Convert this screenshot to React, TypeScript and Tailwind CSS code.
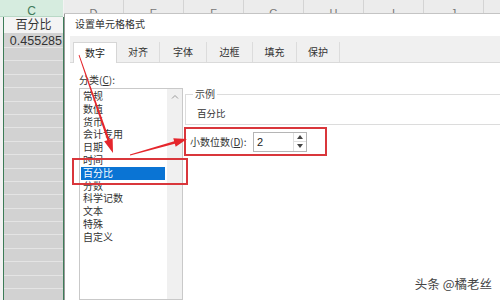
import React from "react";

const items = ["常规", "数值", "货币", "会计专用", "日期", "时间", "百分比", "分数", "科学记数", "文本", "特殊", "自定义"];
const tabs = [
  { t: "对齐", w: "w-[43px]" },
  { t: "字体", w: "w-[47px]" },
  { t: "边框", w: "w-[46px]" },
  { t: "填充", w: "w-[44px]" },
  { t: "保护", w: "w-[43px]" },
];
const cols = ["D", "E", "F", "G", "H", "I", "J"];

export default function App() {
  const rows = Array.from({ length: 20 });
  return (
    <div className="relative w-[500px] h-[300px] overflow-hidden bg-white flex font-['Liberation_Sans','Noto_Sans_CJK_SC',sans-serif] text-[#2b2b2b]">
      {/* Column C */}
      <div className="w-[64px] shrink-0 flex flex-col bg-[#f3f3f3]">
        <div className="h-[17px] w-[63px] shrink-0 bg-[#d6ecdf] border-b border-[#b9d8c6] overflow-hidden text-center text-[12px] leading-[14px] pt-[4px] text-[#3f7a5a]">
          C
        </div>
        <div className="ml-[3px] w-[61px] flex-1 border-x border-[#3d7c58] flex flex-col overflow-hidden">
          <div className="h-[16px] shrink-0 bg-[#f4f4f4] text-center text-[12px] leading-[17px] text-[#333]">百分比</div>
          <div className="h-[14px] shrink-0 bg-[#d2d2d2] text-right pr-[1px] text-[12.5px] leading-[16px] text-[#333] whitespace-nowrap">0.455285</div>
          {rows.map((_, i) => (
            <div key={i} className="h-[13.4px] shrink-0 bg-[#d2d2d2] border-t border-[#e4e4e4]" />
          ))}
        </div>
      </div>

      {/* Right region */}
      <div className="flex-1 flex flex-col min-w-0">
        <div className="h-[14px] shrink-0 flex bg-[#ececec] border-b border-[#c4c4c4] overflow-hidden">
          {cols.map((c) => (
            <div key={c} className="w-[60px] shrink-0 border-r border-[#d4d4d4] text-center text-[11px] leading-[14px] pt-[6px] text-[#777]">
              {c}
            </div>
          ))}
        </div>

        {/* Dialog */}
        <div className="flex-1 flex flex-col bg-white border-l border-[#9a9a9a] overflow-hidden font-['Noto_Sans_CJK_SC',sans-serif]">
          <div className="h-[22px] shrink-0 pl-[10px] pt-[4px] text-[10px] leading-[12px] text-[#333]">设置单元格格式</div>

          <div className="h-[27px] shrink-0 ml-[5px] bg-[#f0f0f0] border-b border-[#dadada] flex items-end pl-[3px]">
            <div className="w-[44px] h-[21px] bg-white border-x border-t border-[#d6d6d6] text-center text-[10px] leading-[20px] text-[#222] -mb-px">
              数字
            </div>
            {tabs.map((tb) => (
              <div key={tb.t} className={`${tb.w} h-[20px] border-r border-[#dcdcdc] text-center text-[10px] leading-[20px] text-[#333]`}>
                {tb.t}
              </div>
            ))}
          </div>

          <div className="flex-1 flex">
            {/* Category list */}
            <div className="ml-[14px] w-[104px] shrink-0 flex flex-col">
              <div className="mt-[11px] text-[10px] leading-[12px] text-[#333]">
                分类(<span className="underline">C</span>):
              </div>
              <div className="mt-[2px] flex-1 flex border border-[#c9c9c9] bg-white">
                <div className="flex-1 pt-[1px]">
                  {items.map((it) => (
                    <div
                      key={it}
                      className={
                        it === "百分比"
                          ? "ml-[1px] w-[84px] h-[12.8px] leading-[12.8px] pl-[2px] text-[10px] bg-[#0a74d4] text-white"
                          : "ml-[1px] w-[84px] h-[12.8px] leading-[12.8px] pl-[2px] text-[10px] text-[#333]"
                      }
                    >
                      {it}
                    </div>
                  ))}
                </div>
                <div className="w-[15px] shrink-0 bg-[#f0f0f0] flex justify-center pt-[5px]">
                  <svg width="8" height="5" viewBox="0 0 8 5">
                    <polyline points="1,4.5 4,1.5 7,4.5" fill="none" stroke="#9a9a9a" strokeWidth="1" />
                  </svg>
                </div>
              </div>
            </div>

            {/* Right pane */}
            <div className="ml-[2px] w-[400px] shrink-0 flex flex-col">
              <fieldset className="mt-[25px] border border-[#dcdcdc] pb-[5px]">
                <legend className="ml-[7px] px-[2px] text-[10px] leading-[12px] text-[#444]">示例</legend>
                <div className="pl-[11px] pt-[7px] text-[9.5px] leading-[12px] text-[#333]">百分比</div>
              </fieldset>
              <div className="mt-[3px] h-[27px] flex items-center">
                <div className="w-[68px] pl-[5px] text-[10px] leading-[12px] text-[#333] whitespace-nowrap">
                  小数位数(<span className="underline">D</span>):
                </div>
                <div className="w-[54px] h-[20px] border border-[#b5b5b5] flex">
                  <div className="flex-1 pl-[3px] text-[11px] leading-[18px] font-['Liberation_Sans',sans-serif] text-[#222]">2</div>
                  <div className="w-[13px] flex flex-col border-l border-[#e0e0e0]">
                    <div className="flex-1 flex items-center justify-center border-b border-[#e0e0e0]">
                      <svg width="6" height="4" viewBox="0 0 6 4"><polygon points="0,4 3,0 6,4" fill="#444" /></svg>
                    </div>
                    <div className="flex-1 flex items-center justify-center">
                      <svg width="6" height="4" viewBox="0 0 6 4"><polygon points="0,0 6,0 3,4" fill="#444" /></svg>
                    </div>
                  </div>
                </div>
              </div>
            </div>
          </div>
        </div>
      </div>

      {/* Annotations */}
      <svg className="absolute left-0 top-0 pointer-events-none" width="500" height="300" viewBox="0 0 500 300">
        <rect x="73" y="159" width="114" height="25" fill="none" stroke="#d9363b" strokeWidth="2" />
        <rect x="185" y="128" width="141" height="27" fill="none" stroke="#d9363b" strokeWidth="2" />
        <polygon
          points="78.62,55.13 107.27,140.19 104.15,141.28 113,153 112.65,138.32 109.53,139.41 79.38,54.87"
          fill="#e5262c"
        />
        <polygon
          points="130.11,155.39 174.8,143.67 175.7,146.84 187,139 173.27,138.18 174.16,141.35 129.89,154.61"
          fill="#e5262c"
        />
      </svg>

      <div className="absolute right-[8px] bottom-[9px] text-[12.5px] leading-[14px] text-[#444] font-['Noto_Sans_CJK_SC',sans-serif] [text-shadow:0_0_2px_#fff,0_0_1px_#fff]">
        头条 @橘老丝
      </div>
    </div>
  );
}
